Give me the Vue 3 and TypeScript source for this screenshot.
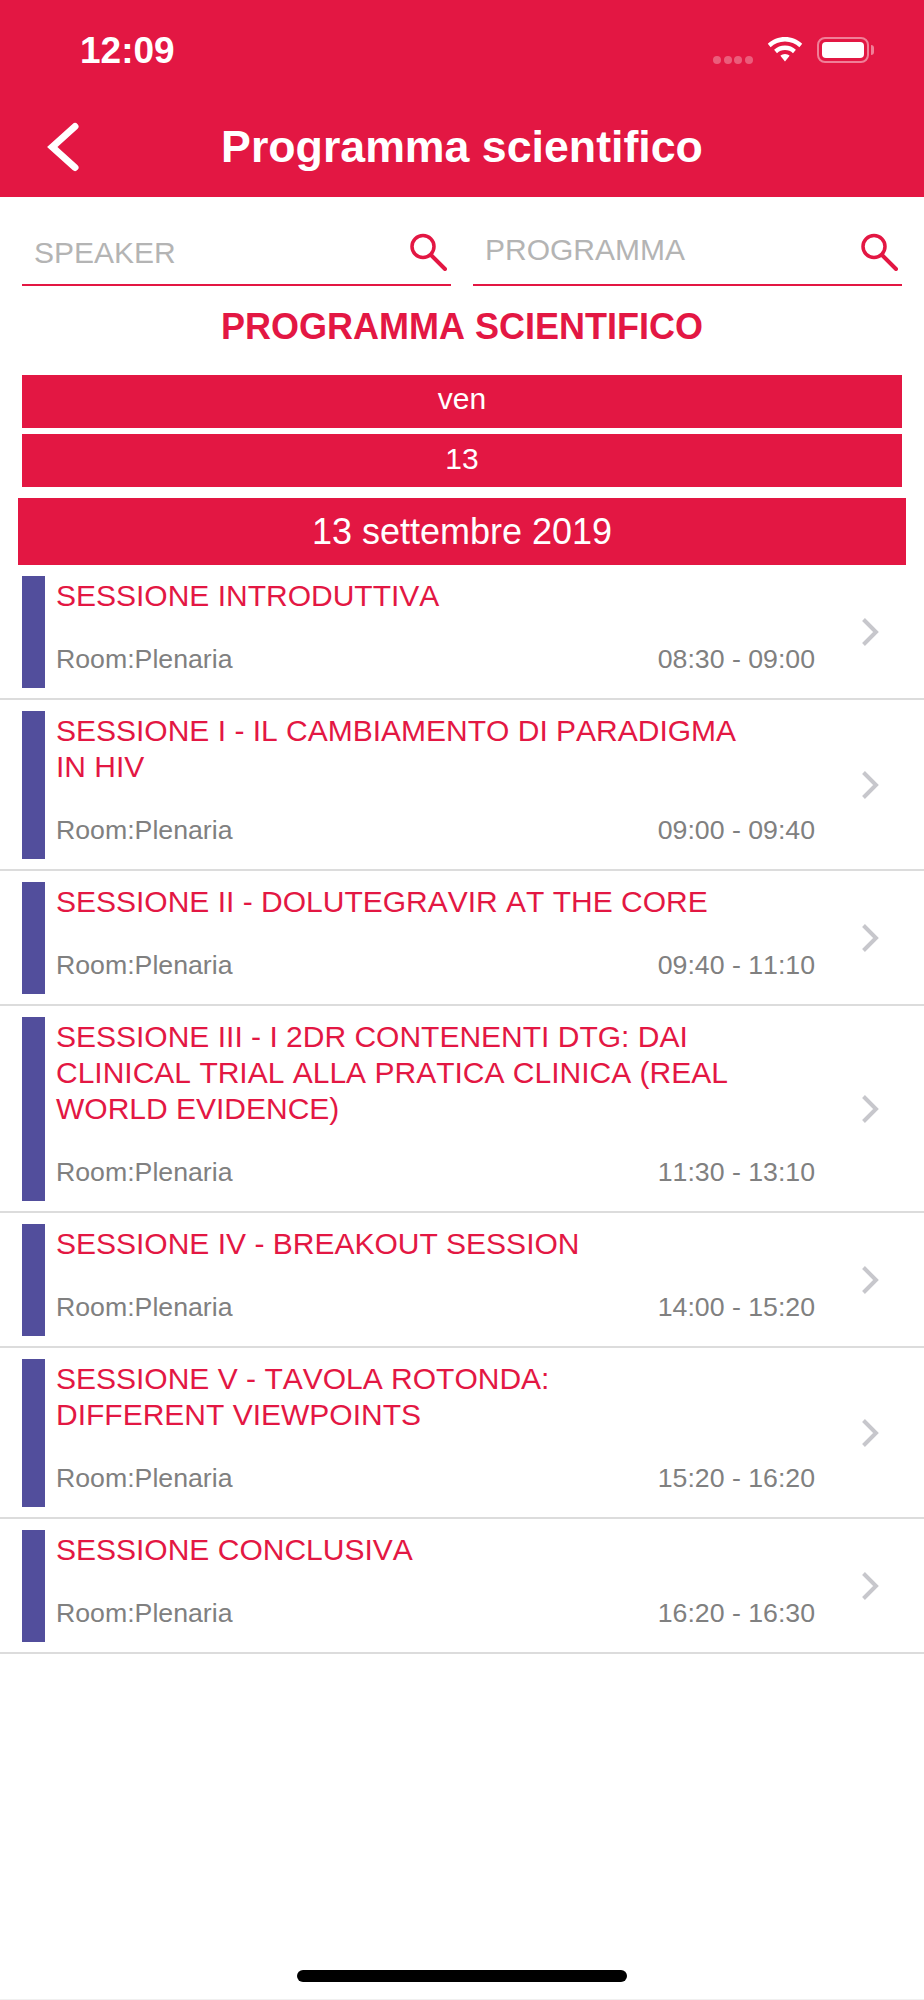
<template>
  <div class="screen">
    <header class="top">
      <div class="status">
        <span class="clock">12:09</span>
        <div class="status-icons">
          <span class="signal"><i></i><i></i><i></i><i></i></span>
          <svg class="wifi" width="36" height="26" viewBox="0 0 36 26">
            <path d="M18 0C11.300 0 5.300 2.600 0.800 6.800L3.600 10.300C7.400 6.800 12.400 4.600 18 4.600C23.600 4.600 28.600 6.800 32.400 10.300L35.200 6.800C30.700 2.600 24.700 0 18 0Z" fill="#fff" />
            <path d="M18 8.500C13.800 8.500 10 10.100 7.100 12.700L10 16.200C12.100 14.300 14.900 13.100 18 13.100C21.100 13.100 23.900 14.300 26 16.200L28.900 12.700C26 10.100 22.200 8.500 18 8.500Z" fill="#fff" />
            <path d="M18 17C16.200 17 14.600 17.700 13.400 18.800L18 24.500L22.600 18.800C21.400 17.700 19.800 17 18 17Z" fill="#fff" />
          </svg>
          <span class="battery"><b></b></span>
        </div>
      </div>
      <div class="nav">
        <svg class="back" width="36" height="50" viewBox="0 0 36 50">
          <path d="M31 4.500L8.300 25L31 45.500" fill="none" stroke="#fff" stroke-width="7" stroke-linecap="round" stroke-linejoin="miter" />
        </svg>
        <h1>Programma scientifico</h1>
      </div>
    </header>

    <div class="searches">
      <div v-for="s in searches" :key="s.label" class="search" :class="s.cls">
        <span>{{ s.label }}</span>
        <svg width="40" height="40" viewBox="0 0 40 40">
          <circle cx="16" cy="15.500" r="11" fill="none" stroke="#e31743" stroke-width="3.500" />
          <path d="M24 24L38 38" stroke="#e31743" stroke-width="4" stroke-linecap="round" />
        </svg>
      </div>
    </div>

    <h2>PROGRAMMA SCIENTIFICO</h2>

    <div class="day">ven</div>
    <div class="day second">13</div>
    <div class="date">13 settembre 2019</div>

    <ul class="sessions">
      <li v-for="item in sessions" :key="item.time">
        <span class="mark"></span>
        <div class="body">
          <div class="title">{{ item.title }}</div>
          <div class="meta">
            <span>Room:Plenaria</span>
            <span>{{ item.time }}</span>
          </div>
        </div>
        <svg class="arrow" width="20" height="30" viewBox="0 0 20 30">
          <path d="M2.500 2.500L15 15L2.500 27.500" fill="none" stroke="#c7c7cc" stroke-width="4" />
        </svg>
      </li>
    </ul>

    <div class="home"></div>
  </div>
</template>

<script setup lang="ts">
const searches = [
  { label: 'SPEAKER', cls: 'speaker' },
  { label: 'PROGRAMMA', cls: 'programma' },
]

// line breaks are the ones the app shows, kept in the data
const sessions = [
  { title: 'SESSIONE INTRODUTTIVA', time: '08:30 - 09:00' },
  { title: 'SESSIONE I - IL CAMBIAMENTO DI PARADIGMA\nIN HIV', time: '09:00 - 09:40' },
  { title: 'SESSIONE II - DOLUTEGRAVIR AT THE CORE', time: '09:40 - 11:10' },
  {
    title: 'SESSIONE III - I 2DR CONTENENTI DTG: DAI\nCLINICAL TRIAL ALLA PRATICA CLINICA (REAL\nWORLD EVIDENCE)',
    time: '11:30 - 13:10',
  },
  { title: 'SESSIONE IV - BREAKOUT SESSION', time: '14:00 - 15:20' },
  { title: 'SESSIONE V - TAVOLA ROTONDA:\nDIFFERENT VIEWPOINTS', time: '15:20 - 16:20' },
  { title: 'SESSIONE CONCLUSIVA', time: '16:20 - 16:30' },
]
</script>

<style>
html,
body {
  margin: 0;
  background: #fff;
}
</style>

<style scoped>
.screen {
  position: relative;
  width: 924px;
  height: 2000px;
  box-sizing: border-box;
  overflow: hidden;
  background: #fff;
  border-bottom: 1px solid #f0f0f0;
  font-family: "Liberation Sans", Arial, sans-serif;
  font-kerning: none;
}

.top {
  height: 197px;
  background: #e31743;
  color: #fff;
}

.status {
  height: 100px;
  display: flex;
  align-items: center;
  justify-content: space-between;
  padding: 0 55px 0 80px;
  box-sizing: border-box;
}

.clock {
  padding-top: 2px;
  font-size: 37px;
  font-weight: 700;
}

.status-icons {
  display: flex;
  align-items: center;
}

.signal {
  display: flex;
  gap: 2.670px;
  margin: 19px 14px 0 0;
}

.signal i {
  width: 8px;
  height: 8px;
  border-radius: 50%;
  background: rgba(255, 255, 255, 0.3);
}

.wifi {
  margin-right: 14px;
}

.battery {
  position: relative;
  width: 52px;
  height: 26px;
  padding: 3px;
  box-sizing: border-box;
  border: 2px solid rgba(255, 255, 255, 0.45);
  border-radius: 8px;
}

.battery b {
  display: block;
  height: 100%;
  background: #fff;
  border-radius: 4px;
}

.battery::after {
  content: "";
  position: absolute;
  right: -7px;
  top: 6px;
  width: 3px;
  height: 10px;
  background: rgba(255, 255, 255, 0.45);
  border-radius: 0 3px 3px 0;
}

.nav {
  position: relative;
  height: 93px;
  display: flex;
  align-items: center;
  justify-content: center;
}

.back {
  position: absolute;
  left: 44px;
  top: 22px;
}

h1 {
  margin: 0;
  font-size: 44.700px;
  font-weight: 700;
}

.searches {
  display: grid;
  grid-template-columns: 429px 429px;
  gap: 22px;
  padding: 22px 22px 0;
}

.search {
  height: 65px;
  display: flex;
  justify-content: space-between;
  border-bottom: 2px solid #e31743;
  color: #b4b4b4;
  font-size: 30px;
}

.search span {
  margin-left: 12px;
}

.speaker span {
  padding-top: 16.500px;
}

.programma span {
  padding-top: 13.500px;
}

.search svg {
  margin: 12px 4px 0 0;
}

h2 {
  margin: 21px 0 0;
  height: 40px;
  line-height: 40px;
  text-align: center;
  font-size: 36px;
  font-weight: 700;
  color: #e31743;
}

.day {
  margin: 28px 22px 0;
  height: 53px;
  line-height: 48px;
  background: #e31743;
  color: #fff;
  text-align: center;
  font-size: 30px;
}

.second {
  margin-top: 6px;
  line-height: 49px;
}

.date {
  margin: 11px 18px 0;
  height: 67px;
  line-height: 68px;
  background: #e31743;
  color: #fff;
  text-align: center;
  font-size: 36px;
}

.sessions {
  list-style: none;
  margin: 0;
  padding: 0;
}

.sessions li {
  display: flex;
  align-items: stretch;
  padding: 11px 0 10px 22px;
  border-bottom: 2px solid #dcdcdc;
}

.mark {
  flex: none;
  width: 23px;
  background: #524e9c;
}

.body {
  width: 759px;
  margin-left: 11px;
}

.title {
  padding-top: 2px;
  font-size: 30px;
  line-height: 36px;
  color: #e31743;
  white-space: pre-line;
}

.meta {
  display: flex;
  justify-content: space-between;
  margin-top: 25px;
  height: 49px;
  line-height: 41px;
  font-size: 26.700px;
  color: #808080;
}

.arrow {
  align-self: center;
  margin-left: 46px;
}

.home {
  position: absolute;
  left: 297px;
  bottom: 17px;
  width: 330px;
  height: 12px;
  background: #000;
  border-radius: 6px;
}
</style>
